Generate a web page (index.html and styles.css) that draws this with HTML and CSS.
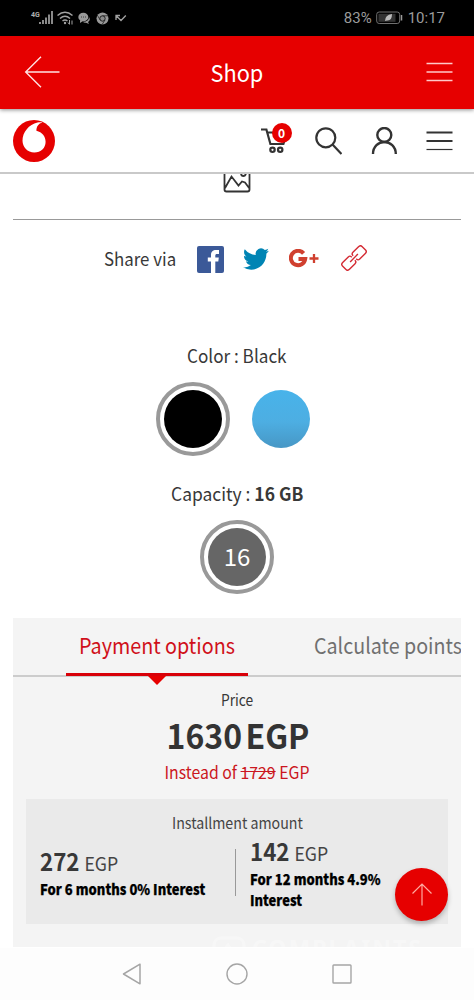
FILE: index.html
```html
<!DOCTYPE html>
<html lang="en">
<head>
<meta charset="utf-8">
<meta name="viewport" content="width=device-width, initial-scale=1">
<title>Shop</title>
<link rel="stylesheet" href="styles.css">
</head>
<body>
<div class="phone">
  <div class="status">
    <svg class="status-icons" width="110" height="36" viewBox="0 0 110 36" fill="none" stroke="#a2a2a2">
      <text class="network" x="1" y="17" fill="#b0b0b0" stroke="none">4G</text>
      <path stroke-width="1.7" d="M10 24v-2M13 24v-4M16 24v-6.500M19 24v-9.500M22 24v-13"/>
      <path stroke-width="1.5" d="M27.500 15.500q7.500-6.500 15 0M30 18.500q5-4.500 10 0M32.500 21q2.500-2 5 0"/>
      <circle cx="35" cy="23" r="1.200" fill="#a2a2a2" stroke="none"/>
      <path stroke-width="1" d="M39.500 20v4M38 22.500l1.500 2M42 24.500v-4"/>
      <ellipse cx="53.300" cy="17" rx="5" ry="4.300" fill="#999" stroke="none"/>
      <path d="M50 20v3l3-2zM59 17q2 3-1 5l1 2-3-1.300q-2 .5-3-1 6 0 6-4.700z" fill="#999" stroke="none"/>
      <path d="M51 17h.8M53 17h.8M55 17h.8" stroke="#222" stroke-width="1"/>
      <circle cx="72.500" cy="18.500" r="6" fill="#999" stroke="none"/>
      <circle cx="72.500" cy="18.500" r="2.700" stroke="#222" fill="#888" stroke-width="1"/>
      <path d="M72.500 15.800h5.500M70.200 20l-3-5M75 20l-3 4.600" stroke="#222" stroke-width=".8"/>
      <path d="M86 20v-4.500h4M86 15.500l5 5 4.800-5" stroke-width="1.300"/>
    </svg>
    <div class="status-right">
      <span class="battery-text">83%</span>
      <svg width="27" height="14" viewBox="0 0 27 14"><rect x=".7" y="1" width="23" height="11.500" rx="2.500" fill="none" stroke="#707070"/><rect x="2.500" y="2.800" width="17" height="8" fill="#333"/><path d="M9 10q0-6 7-7 0 7-5 6.500z" fill="#bbb"/><path d="M25.500 4v5.500" stroke="#999" stroke-width="1.500"/></svg>
      <span class="clock">10:17</span>
    </div>
  </div>

  <div class="appbar">
    <svg width="36" height="32" viewBox="0 0 36 32" fill="none" stroke="#ffe3e3" stroke-width="1.400"><path d="M35.500 16H2M17 .700L1.700 16 17 31.300"/></svg>
    <h1 class="appbar-title"><span class="t t-shop">Shop</span></h1>
    <svg width="27" height="20" viewBox="0 0 27 20" stroke="#ffc9c9" stroke-width="1.500"><path d="M.5 1.500h26M.5 10h26M.5 18.500h26"/></svg>
  </div>

  <header class="sitebar">
    <svg class="logo" width="42" height="42" viewBox="0 0 42 42"><circle cx="21" cy="21" r="21" fill="#e60000"/><path fill="#fff" d="M21.300 32.500C14.500 32.500 9.600 27.300 9.500 20.800 9.400 12.300 16 4.300 24.500 2.500c1.700-.4 3.400-.5 5-.1-4 .8-6.200 4.200-6.100 8.300 5.800 1.300 9.200 5.700 9.200 11.100 0 6.400-4.700 10.700-11.300 10.700z"/></svg>
    <div class="tools">
      <div class="cart">
        <svg width="28" height="28" viewBox="0 0 28 28" fill="none" stroke="#333" stroke-width="2.200"><path d="M0 2.500h5.400l4 14.500h13l2.300-7M7 5.500h10"/><circle cx="11.500" cy="22.800" r="2.200"/><circle cx="19.200" cy="22.800" r="2.200"/></svg>
        <span class="badge">0</span>
      </div>
      <svg width="28" height="28" viewBox="0 0 28 28" fill="none" stroke="#333" stroke-width="2.200"><circle cx="11.800" cy="10.800" r="9.500"/><path d="M18.500 17.500l9 9.500"/></svg>
      <svg width="28" height="28" viewBox="0 0 28 28" fill="none" stroke="#333" stroke-width="2.400"><circle cx="14.300" cy="8" r="7"/><path d="M3 27C3 19.500 8.500 15 14.300 15S25.800 19.500 25.800 27"/></svg>
      <svg width="27" height="20" viewBox="0 0 27 20" stroke="#333" stroke-width="2"><path d="M.5 1.500h26M.5 10h26"/><path stroke-width="1.200" d="M.5 18.500h26"/></svg>
    </div>
  </header>

  <main class="content">
    <div class="picture"><svg width="28" height="20" viewBox="0 0 28 20" fill="none" stroke="#333" stroke-width="1.800"><path d="M1.500-2v17.500q0 2 2 2h21q2 0 2-2V-2M2 14L8.500 2.500l7 9 3.500-4 3 1 4.500 6M18-1q0 3 2.300 3T23-1"/></svg></div>
    <div class="share">
      <span class="t t-share">Share via</span>
      <svg class="fb" width="27" height="27" viewBox="0 0 27 27"><rect width="27" height="27" rx="2" fill="#3b5998"/><path fill="#fff" d="M14 27V15.500h-3.200v-4H14V9c0-3.500 2-5 5-5h3v4h-2c-1.300 0-1.700.5-1.700 1.700v1.800h3.500l-.5 4h-3V27z"/></svg>
      <svg class="tw" width="26" height="22" viewBox="0 0 24 20" preserveAspectRatio="none"><path fill="#0084b4" d="M23.950 2.570a10 10 0 0 1-2.820.77 4.960 4.960 0 0 0 2.160-2.720c-.95.550-2 .950-3.130 1.190a4.920 4.920 0 0 0-8.380 4.480A13.930 13.930 0 0 1 1.640 1.160a4.820 4.820 0 0 0-.67 2.480c0 1.700.87 3.210 2.190 4.100a4.900 4.900 0 0 1-2.230-.62v.060a4.920 4.920 0 0 0 3.950 4.830 5 5 0 0 1-2.210.080 4.940 4.940 0 0 0 4.600 3.420A9.870 9.870 0 0 1 0 17.540a13.990 13.990 0 0 0 7.560 2.210c9.050 0 14-7.500 14-13.980 0-.210 0-.420-.020-.630a9.940 9.940 0 0 0 2.410-2.570z"/></svg>
      <svg class="gp" width="30" height="20" viewBox="0 0 30 20" fill="none" stroke="#d0402f"><path stroke-width="4" d="M14.600 4.400A7.200 7.200 0 1 0 16.200 10H9.500"/><path stroke-width="2.300" d="M25 5v9M20.500 9.500h9"/></svg>
      <svg class="link" width="26" height="26" viewBox="0 0 26 26" fill="none" stroke="#d42a33" stroke-width="1.400"><g transform="rotate(-45 13 13)"><path d="M12 10.800v-.3Q12 8.200 9.700 8.200H1.800Q-.8 8.200-.8 10.500v5q0 2.300 2.600 2.300h7.900q2.300 0 2.300-2.300v-.3M14 10.800v-.3q0-2.300 2.300-2.300h7.900q2.600 0 2.600 2.300v5q0 2.300-2.600 2.300h-7.900q-2.300 0-2.300-2.300v-.3M7.500 13h11"/></g></svg>
    </div>

    <section class="option">
      <p class="label"><span class="t t-color">Color : Black</span></p>
      <div class="swatches"><span class="swatch black"></span><span class="swatch blue"></span></div>
    </section>
    <section class="option capacity">
      <p class="label"><span class="t t-cap">Capacity : <b>16 GB</b></span></p>
      <div class="swatches"><span class="swatch grey">16</span></div>
    </section>

    <section class="panel">
      <nav class="tabs">
        <a class="tab active"><span class="t t-pay">Payment options</span></a>
        <a class="tab next"><span class="t t-calc">Calculate points</span></a>
      </nav>
      <p class="price-label"><span class="t t-price">Price</span></p>
      <p class="price"><span class="t t-amount">1630 EGP</span></p>
      <p class="instead"><span class="t t-instead">Instead of <s>1729</s> EGP</span></p>
      <div class="install">
        <p class="install-title"><span class="t t-inst">Installment amount</span></p>
        <div class="plans">
          <div class="plan first">
            <p class="plan-price"><span class="t t-plan"><b>272</b> EGP</span></p>
            <p class="plan-note"><span class="t t-note">For 6 months 0% Interest</span></p>
          </div>
          <div class="plan second">
            <p class="plan-price"><span class="t t-plan"><b>142</b> EGP</span></p>
            <p class="plan-note"><span class="t t-note">For 12 months 4.9%<br>Interest</span></p>
          </div>
        </div>
      </div>
    </section>
  </main>

  <a class="to-top"><svg width="22" height="26" viewBox="0 0 22 26" fill="none" stroke="#ffaaa0" stroke-width="1.200"><path d="M11 23.500V2M1.500 11.500L11 2l9.500 9.500"/></svg></a>

  <div class="watermark">
    <svg width="34" height="24" viewBox="0 0 34 24" fill="none" stroke="#fff" stroke-width="3"><rect x="2" y="2" width="30" height="20" rx="7"/><path d="M11 15l5-6 4 6"/></svg>
    <span>COMPLAINTS</span>
  </div>

  <footer class="navbar">
    <svg width="20" height="24" viewBox="0 0 20 24" fill="none" stroke="#a5a5a5" stroke-width="1.500" stroke-linejoin="round"><path d="M1.500 12L18 2.200v19.600z"/></svg>
    <svg width="24" height="24" viewBox="0 0 24 24" fill="none" stroke="#a5a5a5" stroke-width="1.400"><circle cx="12" cy="12" r="10"/></svg>
    <svg width="20" height="20" viewBox="0 0 20 20" fill="none" stroke="#a5a5a5" stroke-width="1.400"><rect x="1" y="1" width="18" height="18" rx=".8"/></svg>
  </footer>
</div>
</body>
</html>
```
FILE: styles.css
```css
* { box-sizing: border-box; }
body { margin: 0; background: #fff; font-family: "Noto Sans CJK SC", "Noto Sans", sans-serif; color: #383838; }
p, h1 { margin: 0; font-weight: 400; }
svg { display: block; flex: none; }
.phone { position: relative; width: 474px; height: 1000px; overflow: hidden; display: flex; flex-direction: column; background: #fff; }

/* Condensed lettering */
.t { display: inline-block; white-space: nowrap; }
.t-shop { transform: scaleX(.945); }
.t-share { transform: scaleX(.911); transform-origin: left; width: 73px; }
.t-color { transform: scaleX(.926); }
.t-cap { transform: scaleX(.943); }
.t-pay { transform: scaleX(.897); transform-origin: left; }
.t-calc { transform: scaleX(.894); transform-origin: left; }
.t-price { transform: scaleX(.89); }
.t-amount { transform: scaleX(.94); word-spacing: -4px; }
.t-instead { transform: scaleX(.93); }
.t-inst { transform: scaleX(.916); }
.t-plan { transform: scaleX(.93); transform-origin: left; word-spacing: 1px; }
.t-note { transform: scaleX(.897); transform-origin: left; }

.status { height: 36px; flex: none; background: #000; display: flex; justify-content: space-between; padding: 0 29px 0 30px; color: #9b9b9b; }
.network { font: 700 7px Roboto, sans-serif; }
.status-right { display: flex; align-items: center; font: 15px Roboto, sans-serif; }
.battery-text { margin-right: 4px; }
.clock { margin-left: 5px; }

.appbar { height: 73px; flex: none; background: #e60000; display: flex; align-items: center; justify-content: space-between; padding: 0 21px 1px 24px; color: #fff; position: relative; z-index: 2; box-shadow: 0 1px 4px rgba(0,0,0,.45); }
.appbar-title { font-size: 23px; line-height: 30px; margin: 0 12px 1px 0; }

.sitebar { height: 65px; flex: none; border-bottom: 2px solid #c9c9c9; display: flex; justify-content: space-between; align-items: center; padding: 0 21px 0 13px; }
.tools { display: flex; align-items: center; gap: 28px; }
.cart { position: relative; margin-right: -3px; }
.badge { position: absolute; left: 10.500px; top: -4px; width: 20px; height: 20px; border-radius: 50%; background: #e60000; color: #fff; font: 700 12px/19px "Noto Sans CJK SC", sans-serif; text-align: center; }

.content { height: 774px; flex: none; padding: 0 13px; }
.picture { height: 46px; border-bottom: 1px solid #999; display: flex; justify-content: center; }
.share { height: 78px; display: flex; align-items: center; padding-left: 91px; font-size: 18.500px; }
.t-share { margin-bottom: 2px; }
.fb { margin-left: 20px; }
.tw { margin-left: 19px; }
.gp { margin: 0 0 1px 20px; }
.link { margin: 0 0 2px 22px; }

.option { text-align: center; padding-top: 43px; }
.label { font-size: 18.500px; line-height: 28px; }
.swatches { display: flex; justify-content: center; gap: 22px; align-items: center; margin-top: 13px; }
.swatch { width: 58px; height: 58px; border-radius: 50%; }
.black { width: 74px; height: 74px; border: 4px solid #999; padding: 4px; background: #000 content-box; }
.blue { background: linear-gradient(#48b3ea, #4daee2 55%, #4797c5); margin-right: 8px; }
.grey { width: 74px; height: 74px; border: 4px solid #999; padding: 4px; background: #666 content-box; color: #fff; font-size: 24px; line-height: 55px; }
.capacity { padding-top: 23px; }

.panel { margin-top: 24px; height: 329px; background: #f4f4f4; overflow: hidden; text-align: center; }
.tabs { height: 59px; border-bottom: 2px solid #ccc; display: flex; padding-left: 53px; font-size: 22px; line-height: 53px; }
.tab { flex: none; height: 58px; text-align: left; }
.active { position: relative; width: 182px; padding-left: 13px; color: #d0101a; border-bottom: 3px solid #d80008; }
.active::after { content: ""; position: absolute; left: 82px; top: 58px; border: 9px solid transparent; border-top-color: #e60000; border-bottom: 0; }
.next { margin-left: 66px; color: #707070; }
.price-label { font-size: 15.500px; line-height: 24px; margin-top: 10px; }
.price { font-size: 34px; line-height: 44px; font-weight: 700; margin: 2px 0 0 1px; color: #333; }
.instead { font-size: 17px; line-height: 24px; color: #cb1620; margin-top: 3px; }
.install { margin: 15px 13px 0; height: 125px; background: #eaeaea; padding-top: 11px; }
.install-title { font-size: 15.500px; line-height: 24px; color: #444; }
.plans { display: flex; text-align: left; margin-top: 2px; padding-left: 13.500px; }
.plan-price { font-size: 19px; line-height: 30px; color: #444; white-space: nowrap; }
.plan-price b { font-size: 24px; color: #383838; }
.plan-note { font-size: 14.500px; line-height: 20.500px; font-weight: 900; color: #000; white-space: nowrap; margin-top: 1px; -webkit-text-stroke: .25px #000; }
.first { position: relative; width: 196.500px; padding-top: 10px; height: 60px; }
.first::after { content: ""; position: absolute; right: 0; top: 13px; width: 1px; height: 47px; background: #999; }
.second { padding-left: 14px; }

.to-top { position: absolute; z-index: 3; left: 395px; top: 868px; width: 53px; height: 53px; border-radius: 50%; background: #e60000; box-shadow: 0 3px 5px rgba(0,0,0,.25); display: flex; align-items: center; justify-content: center; }
.watermark { position: absolute; z-index: 2; left: 212px; top: 936px; display: flex; align-items: center; gap: 6px; opacity: .35; color: #fff; font: 700 23px/24px "Noto Sans", sans-serif; letter-spacing: 2px; }
.navbar { height: 52px; flex: none; background: #fdfdfd; display: flex; align-items: center; justify-content: space-between; padding: 0 122px; }
```
